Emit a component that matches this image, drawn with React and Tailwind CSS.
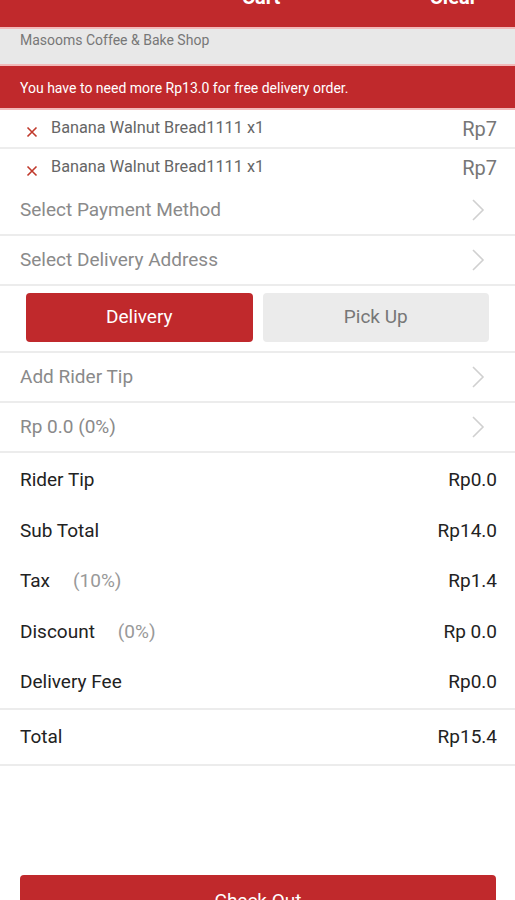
import React from "react";

const font = { fontFamily: "Roboto, 'Noto Sans', sans-serif" };

function Chevron() {
  return (
    <svg width="14" height="24" viewBox="0 0 14 24" className="mr-[10px]">
      <polyline points="2,2 12,12 2,22" fill="none" stroke="#d0d0d0" strokeWidth="1.6" />
    </svg>
  );
}

function Cross() {
  return (
    <svg width="12" height="12" viewBox="0 0 12 12" className="mt-[6px]">
      <path d="M1.5 1.5 L10.5 10.5 M10.5 1.5 L1.5 10.5" stroke="#c0392b" strokeWidth="1.6" />
    </svg>
  );
}

function ItemRow({ last }) {
  return (
    <div
      className={`flex items-center pl-[26px] pr-[18px] ${
        last ? "h-[37px]" : "h-[39px] border-b-2 border-[#ededed]"
      }`}
    >
      <Cross />
      <span className="ml-[13px] text-[16.3px] text-[#666] flex-1">Banana Walnut Bread1111 x1</span>
      <span className="text-[20px] text-[#777]">Rp7</span>
    </div>
  );
}

function NavRow({ label }) {
  return (
    <div className="flex items-center justify-between h-[50px] px-5 border-b-2 border-[#ececec]">
      <span className="text-[19px] text-[#8a8a8a]">{label}</span>
      <Chevron />
    </div>
  );
}

function SumRow({ label, note, value }) {
  return (
    <div className="flex items-center justify-between h-[50.5px] pl-5 pr-[18px]">
      <span className="text-[19px] text-[#222]">
        {label}
        {note && <span className="text-[#999] ml-[23px]">{note}</span>}
      </span>
      <span className="text-[19px] text-[#222]">{value}</span>
    </div>
  );
}

export default function App() {
  return (
    <div className="w-[515px] h-[900px] overflow-hidden bg-white flex flex-col" style={font}>
      {/* header (top cut off by the screenshot) */}
      <div className="h-[29px] overflow-hidden bg-[#c0292c] border-b-2 border-[#f2b9b9] shrink-0">
        <div className="flex items-center h-[56px] -mt-[31px] text-white text-[20px] font-bold">
          <span className="ml-[242px]">Cart</span>
          <span className="ml-auto mr-[38px]">Clear</span>
        </div>
      </div>

      <div className="h-[37px] bg-[#e8e8e8] px-5 pt-px text-[14px] text-[#777] border-b-2 border-[#f2b9b9] shrink-0">
        Masooms Coffee &amp; Bake Shop
      </div>

      <div className="h-[44px] bg-[#c0292c] px-5 pt-[2px] flex items-center text-[14px] text-white border-b-2 border-[#f2b9b9] shrink-0">
        You have to need more Rp13.0 for free delivery order.
      </div>

      <ItemRow />
      <ItemRow last />

      <NavRow label="Select Payment Method" />
      <NavRow label="Select Delivery Address" />

      <div className="flex gap-[10px] px-[26px] pt-[7px] pb-[9px] border-b-2 border-[#ececec]">
        <div className="flex-1 h-[49px] rounded-[4px] bg-[#c0292c] flex items-center justify-center text-white text-[19px]">
          Delivery
        </div>
        <div className="flex-1 h-[49px] rounded-[4px] bg-[#ebebeb] flex items-center justify-center text-[#777] text-[19px]">
          Pick Up
        </div>
      </div>

      <NavRow label="Add Rider Tip" />
      <NavRow label="Rp 0.0 (0%)" />

      <div className="pt-[2px] border-b-2 border-[#ececec]">
        <SumRow label="Rider Tip" value="Rp0.0" />
        <SumRow label="Sub Total" value="Rp14.0" />
        <SumRow label="Tax" note="(10%)" value="Rp1.4" />
        <SumRow label="Discount" note="(0%)" value="Rp 0.0" />
        <SumRow label="Delivery Fee" value="Rp0.0" />
      </div>

      <div className="flex items-center justify-between h-[56.5px] pl-5 pr-[18px] border-b-2 border-[#ececec]">
        <span className="text-[19px] text-[#222]">Total</span>
        <span className="text-[19px] text-[#222]">Rp15.4</span>
      </div>

      <div className="flex-1" />

      <div className="pl-5 pr-[19px] shrink-0">
        <div className="h-[50px] -mb-[25px] rounded-[4px] bg-[#c0292c] flex items-start justify-center pt-[12px] text-white text-[19px]">
          Check Out
        </div>
      </div>
    </div>
  );
}
